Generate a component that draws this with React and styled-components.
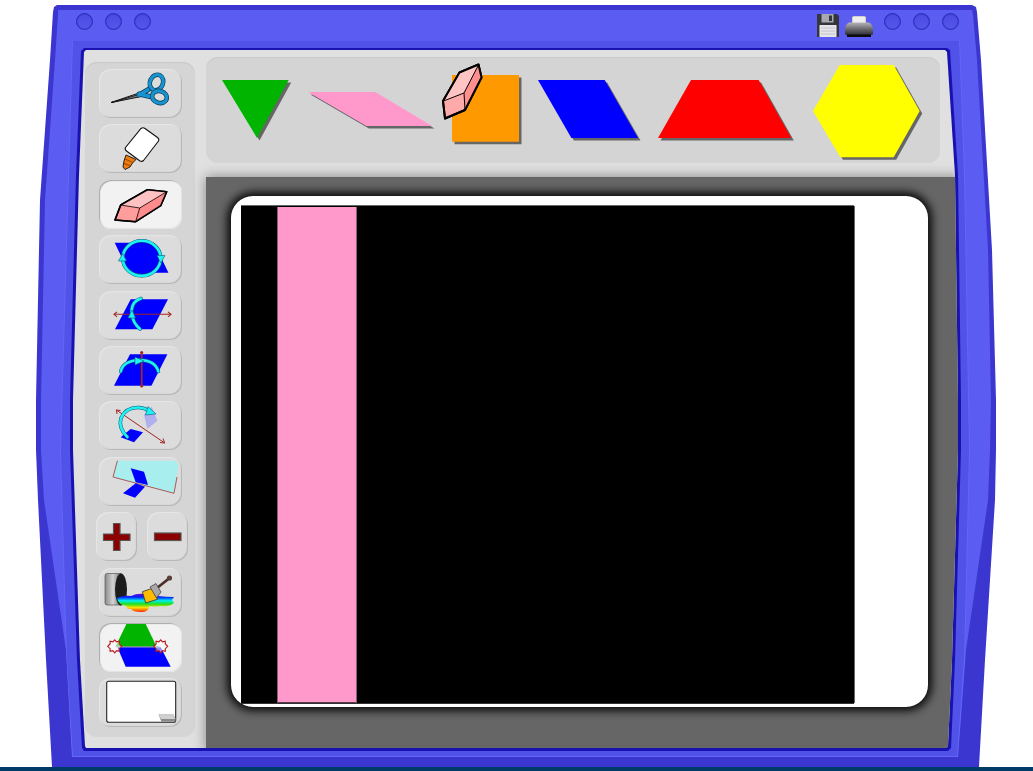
import React from 'react';
import styled, { createGlobalStyle } from 'styled-components';

// all outlines are written in page pixels, poly() moves them to the element's own origin
const poly = (pts, ox, oy) =>
    `polygon(${pts.map(([x, y]) => `${x - ox}px ${y - oy}px`).join(', ')})`;

const OUTER = [[57, 5], [972, 5], [976, 7], [977, 12], [981, 60], [992, 250], [996, 400], [996, 450], [995, 500], [985, 660], [979, 767], [52, 767], [46, 660], [38, 500], [36, 450], [36, 400], [40, 200], [50, 60], [53, 12], [54, 7]];
const LIGHT = [[58, 10], [972, 10], [973, 15], [977, 60], [988, 250], [991, 400], [990, 450], [988, 500], [966, 650], [958, 757], [72, 757], [66, 650], [44, 500], [41, 450], [41, 400], [45, 200], [55, 60], [58, 15]];
const BAND = [[72, 41], [960, 41], [965, 175], [970, 450], [965, 660], [958, 757], [72, 757], [66, 660], [60, 450]];
const BAND_FILL = [[73, 41], [959, 41], [964, 175], [969, 450], [964, 660], [957, 756], [73, 756], [67, 660], [61, 450]];
const WINDOW = [[84, 48], [947, 48], [950, 50], [958, 175], [961, 400], [961, 450], [955, 660], [951, 748], [948, 751], [84, 751], [82, 748], [77, 660], [70, 450], [70, 400], [76, 175], [81, 51]];
const WINDOW_FACE = [[86, 50], [945, 50], [947, 52], [955, 175], [958, 400], [958, 450], [952, 660], [948, 746], [946, 748], [86, 748], [85, 746], [80, 660], [73, 450], [73, 400], [79, 175], [84, 52]];

const GlobalStyle = createGlobalStyle`
    html, body {
        margin: 0;
        padding: 0;
        background: #fff;
        font-family: "Liberation Sans", sans-serif;
    }
`;

const Page = styled.div`
    width: 1033px;
    height: 771px;
    overflow: hidden;
    display: flex;
    flex-direction: column;
    background: #fff;
`;

const Frame = styled.div`
    flex: none;
    width: 960px;
    height: 762px;
    margin: 5px 0 0 36px;
    background: #3c36d0;
    clip-path: ${poly(OUTER, 36, 5)};
`;

const FrameFace = styled.div`
    height: 100%;
    display: flex;
    flex-direction: column;
    background: #5b5df2;
    clip-path: ${poly(LIGHT, 36, 5)};
`;

const TitleBar = styled.div`
    flex: none;
    height: 33px;
    padding: 0 37.5px 3px 40px;
    display: flex;
    align-items: center;
    justify-content: space-between;
`;

const TitleGroup = styled.div`
    display: flex;
    align-items: center;
    gap: 12px;
`;

const Light = styled.span`
    display: block;
    width: 17px;
    height: 17px;
    box-sizing: border-box;
    border: 1px solid #2b29bb;
    border-radius: 50%;
    background: linear-gradient(#4a4ae0, #5557ec);
    box-shadow: inset 0 0 1px #2b29bb;
`;

const Band = styled.div`
    flex: none;
    width: 910px;
    height: 716px;
    margin-left: 24px;
    background: #6466f6;
    clip-path: ${poly(BAND, 60, 41)};
`;

const BandFill = styled.div`
    height: 100%;
    padding-top: 7px;
    padding-left: 10px;
    box-sizing: border-box;
    background: #5052e8;
    clip-path: ${poly(BAND_FILL, 60, 41)};
`;

const Window = styled.div`
    width: 891px;
    height: 703px;
    background: #1912b0;
    clip-path: ${poly(WINDOW, 70, 48)};
`;

const WindowFace = styled.div`
    height: 100%;
    display: flex;
    background: #e0e0e0;
    clip-path: ${poly(WINDOW_FACE, 70, 48)};
`;

const ToolPanel = styled.div`
    flex: none;
    width: 110px;
    height: 675px;
    margin: 14px 0 0 15px;
    padding-top: 7px;
    box-sizing: border-box;
    display: flex;
    flex-direction: column;
    align-items: center;
    gap: 6.4px;
    border-radius: 12px;
    background: #d5d5d5;
    box-shadow: inset 0 1px 1px #c8c8c8;
`;

const ToolRow = styled.div`
    display: flex;
    gap: 10px;
    margin-left: 4px;
`;

const Tool = styled.button`
    flex: none;
    width: ${(p) => (p.$small ? 41 : 83)}px;
    height: 49px;
    padding: 0;
    border: none;
    border-radius: 12px;
    background: ${(p) => (p.$active ? '#f2f2f2' : '#dcdcdc')};
    box-shadow: ${(p) =>
        p.$active
            ? 'inset 1px 1px 1px #a8a8a8, inset -1px -1px 1px #e4e4e4'
            : 'inset 1px 1px 1px #e6e6e6, inset -1px -1px 1px #b4b4b4'};
    svg {
        display: block;
    }
`;

const Main = styled.div`
    flex: 1;
    min-width: 0;
    margin-left: 11px;
    display: flex;
    flex-direction: column;
`;

const Tray = styled.div`
    position: relative;
    flex: none;
    width: 734px;
    height: 106px;
    margin-top: 9px;
    padding-left: 16px;
    box-sizing: border-box;
    display: flex;
    align-items: center;
    gap: 16.5px;
    border-radius: 12px;
    background: #d4d4d4;
    box-shadow: inset 0 1px 1px #cacaca;
`;

const ShapeArt = styled.svg`
    flex: none;
    display: block;
    margin-left: ${(p) => p.$left || 0}px;
    margin-top: ${(p) => p.$top || 0}px;
`;

const Cursor = styled.svg`
    position: absolute;
    left: 235px;
    top: 6px;
`;

const Stage = styled.div`
    flex: 1;
    min-height: 0;
    margin-top: 14px;
    padding: 19px 0 0 25px;
    background: #666;
    box-shadow: 0 0 12px rgba(0, 0, 0, 0.42);
`;

const Canvas = styled.div`
    width: 697px;
    height: 511px;
    padding: 10px 0 0 10px;
    box-sizing: border-box;
    border-radius: 22px;
    background: #fff;
    box-shadow: 0 0 8px 4px rgba(0, 0, 0, 0.9);
`;

const Board = styled.div`
    width: 613px;
    height: 497px;
    padding: 1px 0 0 36px;
    box-sizing: border-box;
    background: #000;
    box-shadow: 0 -1px 0 #666, 1px 0 0 #666, 0 1px 0 #333;
`;

const Strip = styled.div`
    width: 80px;
    height: 496px;
    background: #ff99cc;
    box-shadow: inset 1px 0 0 #8a5c74, inset -1px 0 0 #8a5c74, inset 0 -1px 0 #5a3a4a;
`;

const Footer = styled.div`
    flex: none;
    height: 4px;
    background: #003a66;
`;

const SHAPES = [
    { color: '#00b400', pts: [[222.3, 79.3], [289, 79.3], [257.3, 137.3]] },
    { color: '#ff99cc', pts: [[308.3, 91.7], [375.7, 91.7], [432.3, 125.7], [366.7, 125.7]] },
    { color: '#ff9900', pts: [[452, 75], [519, 75], [519, 141.7], [452, 141.7]] },
    { color: '#0000ff', pts: [[538.3, 79.3], [605, 79.3], [638.3, 137.3], [571.7, 137.3]] },
    { color: '#ff0000', pts: [[690.7, 79.3], [758.3, 79.3], [791, 137.3], [657.7, 137.3]] },
    { color: '#ffff00', pts: [[840, 65], [894, 65], [920, 111], [894, 157.3], [840.7, 157.3], [813.3, 111]], left: 2.5, top: 5 },
];

const Shape = ({ color, pts, left, top }) => {
    const xs = pts.map((p) => p[0]);
    const ys = pts.map((p) => p[1]);
    const x0 = Math.min(...xs);
    const y0 = Math.min(...ys);
    const w = Math.max(...xs) - x0 + 3;
    const h = Math.max(...ys) - y0 + 3;
    const points = (d) => pts.map(([x, y]) => `${x - x0 + d},${y - y0 + d}`).join(' ');
    return (
        <ShapeArt width={w} height={h} $left={left} $top={top}>
            <polygon points={points(2.5)} fill="#666" />
            <polygon points={points(0)} fill={color} />
        </ShapeArt>
    );
};

const Icon = ({ w = 83, children }) => (
    <svg width={w} height="49" viewBox={`0 0 ${w} 49`}>{children}</svg>
);

const Scissors = () => (
    <Icon>
        <path d="M12 33.5 L40 24 L42 26.5 Z" fill="#e4e4e4" stroke="#111" strokeWidth="1" />
        <path d="M12.5 33.5 L40 28 L41 25 Z" fill="#777" stroke="#111" strokeWidth="0.9" />
        <path d="M40 26 L52 19 M40 25 L53 28" stroke="#0c3c58" strokeWidth="5" strokeLinecap="round" />
        <path d="M40 26 L52 19 M40 25 L53 28" stroke="#1793cf" strokeWidth="3.6" strokeLinecap="round" />
        <ellipse cx="57.5" cy="13.5" rx="6.5" ry="8" fill="#dcdcdc" stroke="#0c3c58" strokeWidth="4.6" transform="rotate(25 57.5 13.5)" />
        <ellipse cx="57.5" cy="13.5" rx="6.5" ry="8" fill="none" stroke="#1793cf" strokeWidth="3.2" transform="rotate(25 57.5 13.5)" />
        <ellipse cx="60.5" cy="28" rx="7.5" ry="6" fill="#dcdcdc" stroke="#0c3c58" strokeWidth="4.6" transform="rotate(15 60.5 28)" />
        <ellipse cx="60.5" cy="28" rx="7.5" ry="6" fill="none" stroke="#1793cf" strokeWidth="3.2" transform="rotate(15 60.5 28)" />
    </Icon>
);

const Glue = () => (
    <Icon>
        <path d="M27 31 L37 35.5 L33.5 39 L31 43 L26 45.5 L24 43 L25 37 Z" fill="#f07d0a" stroke="#222" strokeWidth="1" strokeLinejoin="round" />
        <path d="M26 35 L34 38.5 M25 39.5 L32 42" stroke="#8a4000" strokeWidth="0.9" />
        <path d="M42 4.5 Q44 3 46 4.5 L58.5 13.5 Q60.5 15 59.5 17 L44.5 36.5 Q43 38 41 37 L27.5 27 Q25.5 25.5 26.5 23.5 Z" fill="#fff" stroke="#111" strokeWidth="1.1" />
    </Icon>
);

const Eraser = () => (
    <Icon>
        <path d="M16 40 L21.7 25 L48.4 9.7 L67.7 11.7 L61.7 25.7 L36.7 41.7 Z" fill="#ff9c9c" stroke="#000" strokeWidth="1.6" strokeLinejoin="round" />
        <path d="M21.7 25 L48.4 9.7 L67.7 11.7 L40.7 28 Z" fill="#ffc2c2" />
        <path d="M40.7 28 L67.7 11.7 L61.7 25.7 L36.7 41.7 Z" fill="#ff8c8c" />
        <path d="M21.7 25 L40.7 28 L36.7 41.7 M40.7 28 L67.7 11.7" fill="none" stroke="#000" strokeWidth="0.8" />
        <path d="M16 40 L21.7 25 L48.4 9.7 L67.7 11.7 L61.7 25.7 L36.7 41.7 Z" fill="none" stroke="#000" strokeWidth="1.6" strokeLinejoin="round" />
    </Icon>
);

// cyan arrow stroke with its thin dark edge
const CyanArc = ({ d }) => (
    <>
        <path d={d} fill="none" stroke="#0b5b7a" strokeWidth="3.6" strokeLinecap="round" />
        <path d={d} fill="none" stroke="#1ff2f2" strokeWidth="2.6" strokeLinecap="round" />
    </>
);

const CyanHead = ({ pts }) => <polygon points={pts} fill="#1ff2f2" stroke="#0b5b7a" strokeWidth="0.6" />;

const Rotate = () => (
    <Icon>
        <polygon points="15.7,7.7 55,7.7 69.4,37.7 30,37.7" fill="#0000ff" />
        <ellipse cx="42.7" cy="23.3" rx="19" ry="17.5" fill="#0000ff" />
        <ellipse cx="42.7" cy="23.3" rx="19" ry="17.5" fill="none" stroke="#0b5b7a" strokeWidth="3.6" />
        <ellipse cx="42.7" cy="23.3" rx="19" ry="17.5" fill="none" stroke="#1ff2f2" strokeWidth="2.6" />
        <CyanHead pts="23.8,18.5 27.5,26 19.5,26" />
        <CyanHead pts="61.7,28 58,20.5 66,20.5" />
    </Icon>
);

const FlipOverHorizontal = () => (
    <Icon>
        <polygon points="31.7,8.3 69,8.3 53.4,38.3 16,38.3" fill="#0000ff" />
        <path d="M15 23.3 H72" stroke="#a32525" strokeWidth="1.1" />
        <path d="M18 20.8 L15 23.3 L18 25.8 M69 20.8 L72 23.3 L69 25.8" fill="none" stroke="#a32525" strokeWidth="1.1" />
        <CyanArc d="M42 7.5 Q31 11 33 24 Q34 32 41 38" />
        <CyanHead pts="33,19 36.5,27 29,27" />
    </Icon>
);

const FlipOverVertical = () => (
    <Icon>
        <polygon points="31,8.3 68.4,8.3 52.4,39.7 15,39.7" fill="#0000ff" />
        <path d="M42.7 6 V40.5" stroke="#a32525" strokeWidth="1.8" />
        <circle cx="42.7" cy="6.5" r="1.6" fill="#a32525" />
        <circle cx="42.7" cy="40" r="1.6" fill="#a32525" />
        <CyanArc d="M21.7 25.5 Q24 15 40 14 Q56 14 59.4 25.5" />
        <CyanHead pts="45,15 36,11 36,19" />
    </Icon>
);

const Turn = () => (
    <Icon>
        <path d="M17.4 9 L65.7 42" stroke="#a32525" strokeWidth="1" />
        <path d="M18 13 L17.4 9 L21.5 9.5 M61 41.5 L65.7 42 L64 37.5" fill="none" stroke="#a32525" strokeWidth="1" />
        <polygon points="52.7,5.7 58.4,19.7 48.4,28 45,13.7" fill="#b0b0ee" />
        <polygon points="31.7,28 44,31.3 35,41.3 21.7,36.3" fill="#0000ff" />
        <CyanArc d="M28.4 36 Q19 27 22 17 Q27 6 40 6.5 Q46 7 50 10" />
        <CyanHead pts="57,13 49,5.5 46.5,14" />
    </Icon>
);

const Mirror = () => (
    <Icon>
        <polygon points="18.4,3.7 76,3.7 79.4,8 75,36.3 14,20" fill="#a8eeee" />
        <path d="M18.4 3.7 L14 20 L75 36.3 L78 20" fill="none" stroke="#a85a5a" strokeWidth="1" />
        <polygon points="31.7,11.3 45,14.7 49,28 36.7,25.3" fill="#0000ff" />
        <polygon points="36.7,26.3 46,29.7 36,40.7 24,36.3" fill="#0000ff" />
    </Icon>
);

const Plus = () => (
    <Icon w={41}>
        <path d="M17.5 11.5 H24 V22 H34 V28.5 H24 V38.5 H17.5 V28.5 H7.5 V22 H17.5 Z" fill="#8b0000" stroke="#555" strokeWidth="1.2" />
    </Icon>
);

const Minus = () => (
    <Icon w={41}>
        <rect x="7.5" y="21" width="26.5" height="7.5" fill="#8b0000" stroke="#555" strokeWidth="1.2" />
    </Icon>
);

const Paint = () => (
    <Icon>
        <defs>
            <linearGradient id="canBody" x1="0" y1="0" x2="1" y2="0">
                <stop offset="0" stopColor="#8a8a8a" />
                <stop offset="0.5" stopColor="#d4d4d4" />
                <stop offset="1" stopColor="#6a6a6a" />
            </linearGradient>
            <linearGradient id="rainbow" x1="0" y1="0" x2="0" y2="1">
                <stop offset="0" stopColor="#7a00d0" />
                <stop offset="0.18" stopColor="#0020ff" />
                <stop offset="0.38" stopColor="#00f0f0" />
                <stop offset="0.56" stopColor="#20e020" />
                <stop offset="0.76" stopColor="#ffe000" />
                <stop offset="1" stopColor="#ff2000" />
            </linearGradient>
        </defs>
        <path d="M8 5.5 H22 V37 H8 Q6 37 6 35 V8 Q6 5.5 8 5.5 Z" fill="url(#canBody)" stroke="#444" strokeWidth="0.6" />
        <ellipse cx="22" cy="21.5" rx="6" ry="16" fill="#1c1c1c" />
        <path d="M18 30 Q24 27 32 28 Q38 25 46 26 L58 28 Q68 29 75 29 L73 32 L75 35 Q70 39 62 38 Q54 39 50 38 Q50 44 42 44 Q34 44 32 41 Q26 41 28 38 Q19 37 18 30 Z" fill="url(#rainbow)" />
        <path d="M58 20 L70 10.5" stroke="#4a3228" strokeWidth="2.8" strokeLinecap="round" />
        <circle cx="70.5" cy="10" r="2.6" fill="#5a4034" />
        <polygon points="43.4,23.7 53.4,20.3 58.4,31.3 46.7,35" fill="#ffbb00" stroke="#333" strokeWidth="0.8" />
        <polygon points="51,19 57,15.5 62,24 57.5,30" fill="#a8a8a8" stroke="#333" strokeWidth="0.7" />
    </Icon>
);

const STAR = '0,-6.5 1.8,-4.4 4.6,-5 4.6,-2.4 7,0 4.6,2.4 4.6,5 1.8,4.4 0,6.5 -1.8,4.4 -4.6,5 -4.6,2.4 -7,0 -4.6,-2.4 -4.6,-5 -1.8,-4.4';

const Combine = () => (
    <Icon>
        <polygon points="27.4,1 46.7,1 57.4,23.3 16.7,23.3" fill="#00b400" />
        <polygon points="18.4,24.3 61.7,24.3 71.7,43.7 26.7,43.7" fill="#0000ff" />
        <path d="M16.7 23.6 H60" stroke="#6f9a7f" strokeWidth="1.4" />
        <polygon points={STAR} transform="translate(15.7 23.3)" fill="rgba(255,255,255,0.55)" stroke="#b81818" strokeWidth="1.1" />
        <polygon points={STAR} transform="translate(61.7 23.3)" fill="rgba(255,255,255,0.55)" stroke="#b81818" strokeWidth="1.1" />
    </Icon>
);

const NewPage = () => (
    <Icon>
        <rect x="7.7" y="3.3" width="69" height="41" rx="2" fill="#fff" stroke="#222" strokeWidth="1.1" />
        <path d="M59.5 36.5 H74.5 L76.5 41 V43.7 H62.5 Z" fill="#8a8a8a" />
        <path d="M59.5 36.5 H74.5 L76.5 41 H62 Z" fill="#d0d0d0" />
    </Icon>
);

const Floppy = () => (
    <svg width="22" height="23" viewBox="0 0 22 23" style={{ marginTop: 7, marginRight: -6 }}>
        <path d="M0 0 H20 L22 2 V23 H0 Z" fill="#35353c" />
        <rect x="4.5" y="0" width="12" height="8.5" fill="#a8a8ae" />
        <rect x="12" y="1.5" width="3" height="5.5" fill="#35353c" />
        <rect x="2.5" y="11" width="17" height="12" fill="#e6e6ea" />
        <path d="M4 14 H18 M4 17 H18 M4 20 H18" stroke="#b8b8c0" strokeWidth="0.8" />
    </svg>
);

const Printer = () => (
    <svg width="28" height="21" viewBox="0 0 28 21" style={{ marginTop: 9, marginRight: -1.5 }}>
        <defs>
            <linearGradient id="printerBody" x1="0" y1="0" x2="0" y2="1">
                <stop offset="0" stopColor="#b4b4b8" />
                <stop offset="0.55" stopColor="#66666c" />
                <stop offset="1" stopColor="#2e2e34" />
            </linearGradient>
        </defs>
        <path d="M7 8 V1.5 Q7 0 9 0 H19 Q21 0 21 1.5 V8 Z" fill="#eee" stroke="#777" strokeWidth="0.5" />
        <path d="M4 6.5 H24 Q28 9 28 13 V18 Q28 19 26 19 H2 Q0 19 0 18 V13 Q0 9 4 6.5 Z" fill="url(#printerBody)" />
        <rect x="2" y="18.5" width="24" height="2.5" fill="#0c0c10" />
    </svg>
);

const TOOLS_TOP = [
    { art: <Scissors /> },
    { art: <Glue /> },
    { art: <Eraser />, active: true },
    { art: <Rotate /> },
    { art: <FlipOverHorizontal /> },
    { art: <FlipOverVertical /> },
    { art: <Turn /> },
    { art: <Mirror /> },
];

const TOOLS_BOTTOM = [
    { art: <Paint /> },
    { art: <Combine />, active: true },
    { art: <NewPage /> },
];

function App() {
    return (
        <Page>
            <GlobalStyle />
            <Frame>
                <FrameFace>
                    <TitleBar>
                        <TitleGroup>
                            <Light /><Light /><Light />
                        </TitleGroup>
                        <TitleGroup>
                            <Floppy />
                            <Printer />
                            <Light /><Light /><Light />
                        </TitleGroup>
                    </TitleBar>
                    <Band>
                        <BandFill>
                            <Window>
                                <WindowFace>
                                    <ToolPanel>
                                        {TOOLS_TOP.map((t, i) => (
                                            <Tool key={i} $active={t.active}>{t.art}</Tool>
                                        ))}
                                        <ToolRow>
                                            <Tool $small><Plus /></Tool>
                                            <Tool $small><Minus /></Tool>
                                        </ToolRow>
                                        {TOOLS_BOTTOM.map((t, i) => (
                                            <Tool key={i} $active={t.active}>{t.art}</Tool>
                                        ))}
                                    </ToolPanel>
                                    <Main>
                                        <Tray>
                                            {SHAPES.map((s) => (
                                                <Shape key={s.color} {...s} />
                                            ))}
                                            <Cursor width="42" height="57" viewBox="0 0 42 57">
                                                <path d="M2 38 L18.5 9.5 L37.5 1.5 L40.5 14.5 L24 47 L4 55.5 Z" fill="#ffaaaa" stroke="#000" strokeWidth="2" strokeLinejoin="round" />
                                                <path d="M3 38 L18.5 10 L37 2 L23 30 Z" fill="#ffc4c4" />
                                                <path d="M23 30 L37.5 2 L40 14.5 L24 46.5 Z" fill="#ff8e8e" />
                                                <path d="M2.5 38 L23 30 L37.5 2 M23 30 L24 47" fill="none" stroke="#000" strokeWidth="1" />
                                                <path d="M2 38 L18.5 9.5 L37.5 1.5 L40.5 14.5 L24 47 L4 55.5 Z" fill="none" stroke="#000" strokeWidth="2" strokeLinejoin="round" />
                                            </Cursor>
                                        </Tray>
                                        <Stage>
                                            <Canvas>
                                                <Board>
                                                    <Strip />
                                                </Board>
                                            </Canvas>
                                        </Stage>
                                    </Main>
                                </WindowFace>
                            </Window>
                        </BandFill>
                    </Band>
                </FrameFace>
            </Frame>
            <Footer />
        </Page>
    );
}

export default App;
